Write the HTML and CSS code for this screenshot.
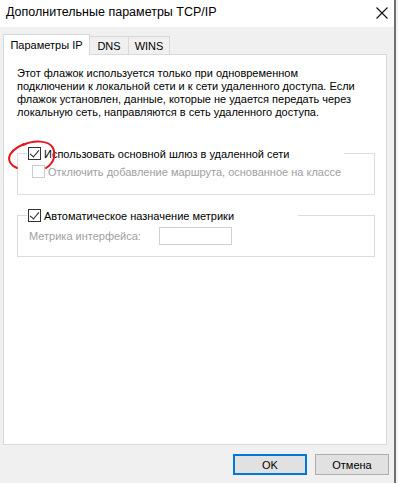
FILE: index.html
```html
<!DOCTYPE html>
<html lang="ru">

<head>
    <meta charset="UTF-8">
    <title>Дополнительные параметры TCP/IP</title>
    <link rel="stylesheet" href="styles.css">
</head>

<body>
    <div class="dialog">
        <div class="titlebar">
            <span class="title">Дополнительные параметры TCP/IP</span>
            <svg class="close" width="12" height="12" viewBox="0 0 12 12">
                <path d="M0.5 0.5 L11.5 11.5 M11.5 0.5 L0.5 11.5" stroke="#111" stroke-width="1.1" fill="none" />
            </svg>
        </div>

        <div class="body">
            <div class="tabs">
                <div class="tab active">Параметры IP</div>
                <div class="tab tab-dns">DNS</div>
                <div class="tab tab-wins">WINS</div>
            </div>

            <div class="panel">
                <p class="info">Этот флажок используется только при одновременном<br>
                    подключении к локальной сети и к сети удаленного доступа. Если<br>
                    флажок установлен, данные, которые не удается передать через<br>
                    локальную сеть, направляются в сеть удаленного доступа.</p>

                <div class="group first-group">
                    <div class="group-head head-wide">
                        <span class="check checked"></span>
                        <span>Использовать основной шлюз в удаленной сети</span>
                    </div>
                    <div class="row disabled">
                        <span class="check"></span>
                        <span>Отключить добавление маршрута, основанное на классе</span>
                    </div>
                </div>

                <div class="group">
                    <div class="group-head head-narrow">
                        <span class="check checked"></span>
                        <span>Автоматическое назначение метрики</span>
                    </div>
                    <div class="row metric disabled">
                        <span class="metric-label">Метрика интерфейса:</span>
                        <span class="field"></span>
                    </div>
                </div>
            </div>

            <div class="buttons">
                <button class="btn default">OK</button>
                <button class="btn">Отмена</button>
            </div>
        </div>

        <svg class="mark" width="54" height="34" viewBox="0 0 54 34">
            <path d="M17 5 C27 0, 43 0, 47 8 C50 15, 48 23, 40 28 M18 4 C11 7, 4 12, 3 18 C3 23, 6 26, 11 28"
                stroke="#e8141c" stroke-width="2" fill="none" stroke-linecap="round" />
        </svg>
    </div>
</body>

</html>
```

FILE: styles.css
```css
html,
body {
    margin: 0;
    background: #f3f3f3;
}

body {
    font-family: "Liberation Sans", Arial, sans-serif;
    font-size: 11px;
    color: #000;
}

.dialog {
    position: relative;
    width: 396px;
    height: 483px;
    background: #f0f0f0;
    border-right: 2px solid #707070;
    box-sizing: border-box;
}

.titlebar {
    height: 27px;
    background: #fff;
    display: flex;
    align-items: center;
    justify-content: space-between;
    padding: 0 6px 0 6px;
}

.title {
    font-size: 12.5px;
    margin-top: -3px;
}

.close {
    margin-top: -2px;
}

.body {
    padding: 7px 0 0 3px;
}

.tabs {
    display: flex;
    align-items: flex-end;
    height: 20px;
    position: relative;
    z-index: 1;
}

.tab {
    height: 18px;
    line-height: 18px;
    border: 1px solid #d9d9d9;
    border-bottom: none;
    border-left: none;
    background: #f0f0f0;
    box-sizing: border-box;
    white-space: nowrap;
    text-align: center;
}

.tab.active {
    width: 87px;
    height: 21px;
    margin-bottom: -1px;
    line-height: 20px;
    background: #fff;
    border-left: 1px solid #d9d9d9;
}

.tab-dns {
    width: 39px;
}

.tab-wins {
    width: 41px;
}

.panel {
    width: 384px;
    height: 391px;
    box-sizing: border-box;
    background: #fff;
    border: 1px solid #d9d9d9;
    padding: 12px 0 0 13px;
}

.info {
    margin: 0;
    line-height: 13px;
}

.group {
    width: 358px;
    height: 42px;
    box-sizing: border-box;
    border: 1px solid #dcdcdc;
}

.first-group {
    margin-top: 34px;
}

.group+.group {
    margin-top: 20px;
}

.group-head {
    display: flex;
    align-items: center;
    gap: 3px;
    margin: -8px 0 0 9px;
    height: 15px;
    padding-left: 1px;
    background: #fff;
}

.head-wide {
    width: 316px;
}

.head-narrow {
    width: 270px;
}

.check {
    width: 13px;
    height: 13px;
    box-sizing: border-box;
    border: 1px solid #333;
    background: #fff;
    flex: none;
    position: relative;
}

.check.checked::after {
    content: "";
    position: absolute;
    left: 3px;
    top: 0px;
    width: 4px;
    height: 8px;
    border: solid #222;
    border-width: 0 1.5px 1.5px 0;
    transform: rotate(40deg);
}

.row {
    display: flex;
    align-items: center;
    gap: 3px;
    margin: 3px 0 0 14px;
    height: 15px;
}

.disabled {
    color: #a0a0a0;
}

.disabled .check {
    border-color: #cccccc;
}

.metric {
    margin: 5px 0 0 11px;
    gap: 0;
}

.metric-label {
    width: 130px;
}

.field {
    width: 73px;
    height: 18px;
    box-sizing: border-box;
    border: 1px solid #d0d0d0;
}

.buttons {
    display: flex;
    justify-content: flex-end;
    gap: 8px;
    margin-top: 9px;
    padding-right: 5px;
}

.btn {
    width: 74px;
    height: 21px;
    box-sizing: border-box;
    background: #e1e1e1;
    border: 1px solid #adadad;
    font-family: "Liberation Sans", Arial, sans-serif;
    font-size: 11px;
    color: #000;
    padding: 0;
}

.btn.default {
    border: 2px solid #0078d7;
}

.mark {
    position: absolute;
    left: 6px;
    top: 140px;
}
```
